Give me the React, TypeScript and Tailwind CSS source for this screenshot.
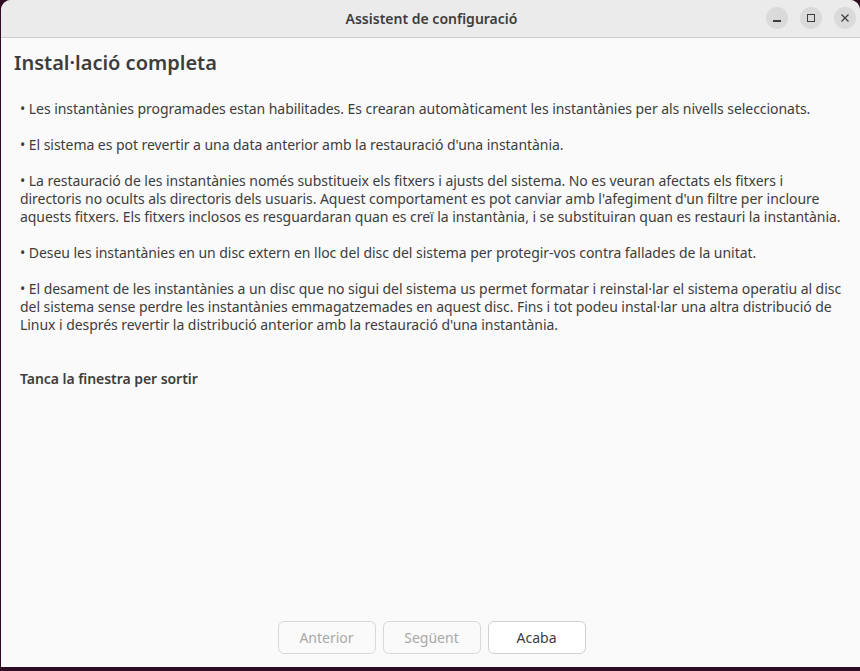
import React from "react";

const paragraphs: string[][] = [
  ["• Les instantànies programades estan habilitades. Es crearan automàticament les instantànies per als nivells seleccionats."],
  ["• El sistema es pot revertir a una data anterior amb la restauració d'una instantània."],
  [
    "• La restauració de les instantànies només substitueix els fitxers i ajusts del sistema. No es veuran afectats els fitxers i",
    "directoris no ocults als directoris dels usuaris. Aquest comportament es pot canviar amb l'afegiment d'un filtre per incloure",
    "aquests fitxers. Els fitxers inclosos es resguardaran quan es creï la instantània, i se substituiran quan es restauri la instantània.",
  ],
  ["• Deseu les instantànies en un disc extern en lloc del disc del sistema per protegir-vos contra fallades de la unitat."],
  [
    "• El desament de les instantànies a un disc que no sigui del sistema us permet formatar i reinstal·lar el sistema operatiu al disc",
    "del sistema sense perdre les instantànies emmagatzemades en aquest disc. Fins i tot podeu instal·lar una altra distribució de",
    "Linux i després revertir la distribució anterior amb la restauració d'una instantània.",
  ],
];

export default function App() {
  return (
    <div
      className="w-[860px] h-[671px] bg-[#2f0b24] flex flex-col overflow-hidden"
      style={{ fontFamily: '"Noto Sans", "Open Sans", sans-serif' }}
    >
      <div className="ml-[1px] h-[667px] rounded-t-[10px] bg-[#fafafa] flex flex-col overflow-hidden">
        {/* Title bar */}
        <div className="h-[38px] shrink-0 bg-[#ebebeb] border-b border-[#cfcfcf] flex items-center relative">
          <div className="flex-1 text-center text-[14px] font-semibold text-[#3d3d3d] pl-[2px]">
            Assistent de configuració
          </div>
          <div className="absolute right-[4px] top-[7px] flex gap-[12px]">
            <div className="w-[22px] h-[22px] rounded-full bg-[#dadada] flex items-center justify-center">
              <div className="w-[8px] h-[1.5px] bg-[#3d3d3d] mt-[6px]" />
            </div>
            <div className="w-[22px] h-[22px] rounded-full bg-[#dadada] flex items-center justify-center">
              <div className="w-[8px] h-[8px] border border-[#3d3d3d]" />
            </div>
            <div className="w-[22px] h-[22px] rounded-full bg-[#dadada] flex items-center justify-center">
              <svg width="10" height="10" viewBox="0 0 10 10">
                <path d="M1.5 1.5 L8.5 8.5 M8.5 1.5 L1.5 8.5" stroke="#3d3d3d" strokeWidth="1.2" />
              </svg>
            </div>
          </div>
        </div>

        {/* Content */}
        <div className="flex-1 flex flex-col">
          <div className="pl-[13px] pt-[12px] text-[20px] leading-[26px] font-semibold text-[#3d3d3d]">
            Instal·lació completa
          </div>
          <div className="pl-[19px] pt-[24px] text-[14px] leading-[18px] tracking-[-0.05px] text-[#3d3d3d] flex flex-col gap-[18px]">
            {paragraphs.map((p, i) => (
              <div key={i}>
                {p.map((line, j) => (
                  <div key={j} className="whitespace-nowrap">
                    {line}
                  </div>
                ))}
              </div>
            ))}
            <div className="pt-[18px] font-semibold">Tanca la finestra per sortir</div>
          </div>
        </div>

        {/* Buttons */}
        <div className="h-[46px] shrink-0 flex justify-center gap-[7px] pl-[2px]">
          <button className="w-[98px] h-[33px] rounded-[6px] border border-[#d8d8d8] bg-[#fafafa] text-[14px] text-[#a8a8a8]">
            Anterior
          </button>
          <button className="w-[98px] h-[33px] rounded-[6px] border border-[#d8d8d8] bg-[#fafafa] text-[14px] text-[#a8a8a8]">
            Següent
          </button>
          <button className="w-[98px] h-[33px] rounded-[6px] border border-[#d0d0d0] bg-white text-[14px] text-[#3d3d3d]">
            Acaba
          </button>
        </div>
      </div>
    </div>
  );
}
